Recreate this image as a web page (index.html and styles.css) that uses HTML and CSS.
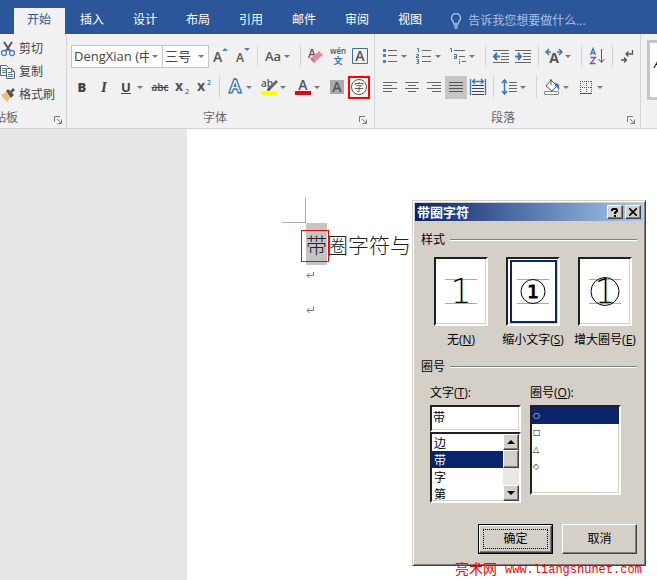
FILE: index.html
```html
<!DOCTYPE html>
<html lang="zh-CN">
<head>
<meta charset="utf-8">
<title>带圈字符</title>
<link rel="stylesheet" href="styles.css">
</head>
<body>
<nav class="tabs">
  <a class="tab active" href="#">开始</a>
  <a class="tab" href="#">插入</a>
  <a class="tab" href="#">设计</a>
  <a class="tab" href="#">布局</a>
  <a class="tab" href="#">引用</a>
  <a class="tab" href="#">邮件</a>
  <a class="tab" href="#">审阅</a>
  <a class="tab" href="#">视图</a>
  <button class="tell">
    <svg width="12" height="16" viewBox="0 0 12 16" fill="none" stroke="#a9c0e4" stroke-width="1.4"><path d="M4 11C4 9 1.500 8 1.500 5a4.500 4.500 0 0 1 9 0C10.500 8 8 9 8 11zM4 13h4M4.500 15h3"/></svg>
    告诉我您想要做什么...
  </button>
</nav>

<div class="ribbon">
  <section class="group clipboard">
    <div class="stack">
      <button class="cmd"><svg width="16" height="16" viewBox="0 0 16 16" fill="none"><path d="M4 1l6 9M12 1L6 10" stroke="#555" stroke-width="2"/><circle cx="4" cy="12" r="2.500" stroke="#4a80bd" stroke-width="1.300"/><circle cx="12" cy="12" r="2.500" stroke="#4a80bd" stroke-width="1.300"/></svg>剪切</button>
      <button class="cmd"><svg width="16" height="16" viewBox="0 0 16 16" fill="#fff" stroke="#666"><path d="M.5 1.500h6l2 2v8h-8z"/><path d="M2 4.500h4M2 6.500h4M2 8.500h4" stroke="#4a80bd"/><path d="M6.500 4.500h5l3 3v7h-8zM11.500 4.500v3h3"/><path d="M8 8.500h4M8 10.500h5M8 12.500h5" stroke="#4a80bd"/></svg>复制</button>
      <button class="cmd"><svg width="16" height="16" viewBox="0 0 16 16"><path d="M1 8l5-3 5 5-4 5z" fill="#edc076"/><path d="M6 4l2-2 6 6-3 3z" fill="#555"/><path d="M10 4l3-3 2 2-3 3z" fill="#555"/></svg>格式刷</button>
    </div>
    <div class="caption"><span>剪贴板</span><button class="launch" aria-label="剪贴板选项"><svg width="8" height="8" viewBox="0 0 8 8" fill="none" stroke="#777"><path d="M.5 6V.5H6M3 3l4 4M7.500 3.500v4h-4"/></svg></button></div>
  </section>

  <section class="group">
    <div class="row">
      <span class="combo name"><select aria-label="字体"><option>DengXian (中文正文)</option></select><i class="caret"></i></span>
      <span class="combo size"><select aria-label="字号"><option>三号</option></select><i class="caret"></i></span>
      <button class="tool" aria-label="增大字号"><svg width="18" height="18" viewBox="0 0 18 18"><text x="2" y="15" class="g" font-size="14">A</text><path d="M11 4l3-3 3 3z" fill="#4a80bd"/></svg></button>
      <button class="tool" aria-label="减小字号"><svg width="18" height="18" viewBox="0 0 18 18"><text x="3" y="15" class="g" font-size="12">A</text><path d="M11 1l3 3 3-3z" fill="#4a80bd"/></svg></button>
      <i class="sep"></i>
      <button class="tool split" aria-label="更改大小写"><svg width="18" height="18" viewBox="0 0 18 18"><text x="1" y="14" class="g" font-size="13">Aa</text></svg><i class="caret"></i></button>
      <i class="sep"></i>
      <button class="tool" aria-label="清除格式"><svg width="18" height="18" viewBox="0 0 18 18"><text x="1" y="11" class="g" font-size="12">A</text><path d="M12 4l4 4-7 6-4-4z" fill="#e58b9b"/><path d="M5 10l4 4-2 2-4-4z" fill="#d86f83"/></svg></button>
      <button class="tool" aria-label="拼音指南"><svg width="18" height="18" viewBox="0 0 18 18" overflow="visible"><text x="9" y="7" class="g" font-size="8" text-anchor="middle">wén</text><text x="9" y="17" class="b" font-size="9" text-anchor="middle">文</text></svg></button>
      <button class="tool" aria-label="字符边框"><svg width="18" height="18" viewBox="0 0 18 18"><path d="M1.500 1.500h15v15h-15z" fill="none" stroke="#41719c"/><text x="9" y="14" class="g" font-size="14" text-anchor="middle">A</text></svg></button>
    </div>
    <div class="row">
      <button class="tool letter"><b>B</b></button>
      <button class="tool letter serif"><em>I</em></button>
      <button class="tool letter split"><u>U</u><i class="caret"></i></button>
      <button class="tool strike"><s>abc</s></button>
      <button class="tool" aria-label="下标"><svg width="18" height="18" viewBox="0 0 18 18"><text x="2" y="13" class="g heavy" font-size="14">x</text><text x="12" y="16" class="b" font-size="7">2</text></svg></button>
      <button class="tool" aria-label="上标"><svg width="18" height="18" viewBox="0 0 18 18"><text x="2" y="13" class="g heavy" font-size="14">x</text><text x="12" y="7" class="b" font-size="7">2</text></svg></button>
      <i class="sep"></i>
      <button class="tool split" aria-label="文本效果"><svg width="18" height="18" viewBox="0 0 18 18"><text x="9" y="14" font-size="16" text-anchor="middle" fill="#fff" stroke="#3b78b8" stroke-width="3" paint-order="stroke">A</text></svg><i class="caret"></i></button>
      <button class="tool split" aria-label="突出显示"><svg width="18" height="18" viewBox="0 0 18 18"><text x="1" y="9" class="g" font-size="10">ab</text><path d="M16 2l2 2-7 7-3 1 1-3z" fill="#666"/><path d="M8 9l3 3-4 1z" fill="#444"/><path d="M1 13h16v4H1z" fill="#ff0"/></svg><i class="caret"></i></button>
      <button class="tool split" aria-label="字体颜色"><svg width="18" height="18" viewBox="0 0 18 18"><text x="9" y="12" class="g" font-size="14" text-anchor="middle">A</text><path d="M1 13h16v4H1z" fill="#e60012"/></svg><i class="caret"></i></button>
      <button class="tool" aria-label="字符底纹"><svg width="18" height="18" viewBox="0 0 18 18"><path d="M2 2h14v14H2z" fill="#aaa"/><text x="9" y="14" class="g" font-size="14" text-anchor="middle">A</text></svg></button>
      <button class="tool marked" aria-label="带圈字符"><svg width="18" height="18" viewBox="0 0 18 18"><circle cx="9" cy="9" r="7.500" fill="#fff" stroke="#555"/><text x="9" y="13" font-size="10" text-anchor="middle" fill="#444">字</text></svg></button>
    </div>
    <div class="caption"><span>字体</span><button class="launch" aria-label="字体选项"><svg width="8" height="8" viewBox="0 0 8 8" fill="none" stroke="#777"><path d="M.5 6V.5H6M3 3l4 4M7.500 3.500v4h-4"/></svg></button></div>
  </section>

  <section class="group paragraph">
    <div class="row">
      <button class="tool split" aria-label="项目符号"><svg width="18" height="18" viewBox="0 0 18 18"><path d="M2 2h3v3H2zM2 7h3v3H2zM2 13h3v3H2z" fill="#4a80bd"/><path d="M7 3.500h9M7 8.500h9M7 14.500h9" stroke="#666"/></svg><i class="caret"></i></button>
      <button class="tool split" aria-label="编号"><svg width="18" height="18" viewBox="0 0 18 18"><path d="M2 1.500h1.500V5M1.500 7.500h2v1.500h-2v1.500h2.500M1.500 12.500h2v4h-2M2 14.500h1.500" fill="none" stroke="#3b78b8"/><path d="M7 3.500h9M7 9.500h9M7 14.500h9" stroke="#666"/></svg><i class="caret"></i></button>
      <button class="tool split" aria-label="多级列表"><svg width="18" height="18" viewBox="0 0 18 18"><path d="M1 1.500h1.500V5M5 7.500h2.500v4H5.500v-2h2M10.500 12v1M10.500 14v3" fill="none" stroke="#3b78b8"/><path d="M5 3.500h11M10 9.500h6M13 14.500h4" stroke="#666"/></svg><i class="caret"></i></button>
      <i class="sep"></i>
      <button class="tool" aria-label="减少缩进"><svg width="18" height="18" viewBox="0 0 18 18"><path d="M1 3.500h16M9 6.500h8M9 9.500h8M9 12.500h8M1 15.500h16" stroke="#666"/><path d="M8 9.500H3M5 6L2 9.500 5 13" fill="none" stroke="#3b78b8" stroke-width="2"/></svg></button>
      <button class="tool" aria-label="增加缩进"><svg width="18" height="18" viewBox="0 0 18 18"><path d="M1 3.500h16M9 6.500h8M9 9.500h8M9 12.500h8M1 15.500h16" stroke="#666"/><path d="M1 9.500h5M4 6l3 3.500L4 13" fill="none" stroke="#3b78b8" stroke-width="2"/></svg></button>
      <i class="sep"></i>
      <button class="tool split" aria-label="中文版式"><svg width="18" height="18" viewBox="0 0 18 18"><text x="9" y="16" class="g heavy" font-size="14" text-anchor="middle">A</text><path d="M6 5H1.500M4 2L1 5l3 3M12 5h4.500M14 2l3 3-3 3" fill="none" stroke="#3b78b8" stroke-width="1.500"/></svg><i class="caret"></i></button>
      <i class="sep"></i>
      <button class="tool" aria-label="排序"><svg width="18" height="18" viewBox="0 0 18 18"><path d="M2.500 8L5 1.500 7.500 8M3.500 6h3" fill="none" stroke="#3b78b8" stroke-width="1.300"/><path d="M2.500 10.500h5l-5 6h5" fill="none" stroke="#8a4fa3" stroke-width="1.300"/><path d="M13.500 2v13M10.500 12l3 3.500 3-3.500" fill="none" stroke="#555"/></svg></button>
      <i class="sep"></i>
      <button class="tool" aria-label="显示编辑标记"><svg width="18" height="18" viewBox="0 0 18 18" fill="none" stroke="#555" stroke-width="1.300"><path d="M13.500 3v4H7M9.500 4.500L7 7l2.500 2.500M2 13h5M5 10.500L7.500 13 5 15.500"/></svg></button>
    </div>
    <div class="row">
      <button class="tool" aria-label="左对齐"><svg width="18" height="18" viewBox="0 0 18 18" stroke="#666"><path d="M2 4.500h14M2 7.500h9M2 10.500h14M2 13.500h9"/></svg></button>
      <button class="tool" aria-label="居中"><svg width="18" height="18" viewBox="0 0 18 18" stroke="#666"><path d="M2 4.500h14M5 7.500h8M2 10.500h14M5 13.500h8"/></svg></button>
      <button class="tool" aria-label="右对齐"><svg width="18" height="18" viewBox="0 0 18 18" stroke="#666"><path d="M2 4.500h14M7 7.500h9M2 10.500h14M7 13.500h9"/></svg></button>
      <button class="tool pressed" aria-label="两端对齐"><svg width="18" height="18" viewBox="0 0 18 18" stroke="#555"><path d="M2 4.500h14M2 7.500h14M2 10.500h14M2 13.500h14"/></svg></button>
      <button class="tool" aria-label="分散对齐"><svg width="18" height="18" viewBox="0 0 18 18" fill="none"><path d="M3 7.500h12M3 10.500h12M3 13.500h12M3 16.500h12" stroke="#444"/><path d="M1.500 1v16M16.500 1v16M4 3.500h10M6 1L3.500 3.500 6 6M12 1l2.500 2.500L12 6" stroke="#3b78b8" stroke-width="1.300"/></svg></button>
      <i class="sep"></i>
      <button class="tool split" aria-label="行距"><svg width="18" height="18" viewBox="0 0 18 18" fill="none"><path d="M4.500 2v14M2 5l2.500-3L7 5M2 13l2.500 3L7 13" stroke="#3b78b8" stroke-width="1.500"/><path d="M9 4.500h8M9 7.500h8M9 10.500h8M9 13.500h8" stroke="#666"/></svg><i class="caret"></i></button>
      <i class="sep"></i>
      <button class="tool split" aria-label="底纹"><svg width="18" height="18" viewBox="0 0 18 18"><path d="M8 2l6 6-5 5-6-5z" fill="#fff" stroke="#555"/><path d="M8 7V1" stroke="#555"/><path d="M12 5c4 0 5 3 4 8-1-3-2-4-4-5z" fill="#3b78b8"/><path d="M1.500 13.500h14v3h-14z" fill="#fff" stroke="#888"/></svg><i class="caret"></i></button>
      <button class="tool split" aria-label="边框"><svg width="18" height="18" viewBox="0 0 18 18" fill="none" stroke="#555"><path d="M3 3.500h12M3 9.500h12M3.500 3v12M9.500 3v12M14.500 3v12" stroke-dasharray="1 1"/><path d="M3 15.500h12"/></svg><i class="caret"></i></button>
    </div>
    <div class="caption"><span>段落</span><button class="launch" aria-label="段落选项"><svg width="8" height="8" viewBox="0 0 8 8" fill="none" stroke="#777"><path d="M.5 6V.5H6M3 3l4 4M7.500 3.500v4h-4"/></svg></button></div>
  </section>
  <section class="gallery"><div class="style-card"><em>A</em></div></section>
</div>

<main class="workspace">
  <article class="sheet">
    <i class="corner"></i>
    <p class="line"><span class="selected">带</span>圈字符与</p>
    <p class="empty"><svg width="9" height="9" viewBox="0 0 9 9" fill="none" stroke="#777"><path d="M7.500 1v3.500H1M3.500 2L1 4.500 3.500 7"/></svg></p>
    <p class="empty"><svg width="9" height="9" viewBox="0 0 9 9" fill="none" stroke="#777"><path d="M7.500 1v3.500H1M3.500 2L1 4.500 3.500 7"/></svg></p>
  </article>
</main>

<form class="dialog" role="dialog" aria-labelledby="dlg-title">
  <header class="titlebar">
    <span id="dlg-title">带圈字符</span>
    <button type="button" class="win" aria-label="帮助"><svg width="8" height="9" viewBox="0 0 8 9" fill="none" stroke="#000" stroke-width="2"><path d="M1 3V2l1-1h3l1 1v1L4 5v1M4 7v2"/></svg></button>
    <button type="button" class="win" aria-label="关闭"><svg width="8" height="8" viewBox="0 0 8 8" stroke="#000" stroke-width="1.600"><path d="M0 0l8 8M8 0L0 8"/></svg></button>
  </header>
  <h2 class="legend">样式</h2>
  <div class="styles">
    <label><input type="radio" name="style"><span class="preview"><svg width="45" height="61" viewBox="0 0 45 61"><path d="M6 18.500h32M6 42.500h32" stroke="#aaa"/><text x="22" y="42" class="digit">1</text></svg></span>无(<u>N</u>)</label>
    <label><input type="radio" name="style" checked><span class="preview"><svg width="45" height="61" viewBox="0 0 45 61"><path d="M6 18.500h32M6 42.500h32" stroke="#aaa"/><circle cx="22" cy="30.500" r="12" fill="#fff" stroke="#000"/><text x="22" y="37" class="digit small">1</text></svg></span>缩小文字(<u>S</u>)</label>
    <label><input type="radio" name="style"><span class="preview"><svg width="45" height="61" viewBox="0 0 45 61"><path d="M6 18.500h32M6 42.500h32" stroke="#aaa"/><circle cx="22" cy="30.500" r="14" fill="none" stroke="#000"/><text x="22" y="42" class="digit">1</text></svg></span>增大圈号(<u>E</u>)</label>
  </div>
  <h2 class="legend">圈号</h2>
  <div class="fields">
    <div class="field">
      <label for="chr">文字(<u>T</u>):</label>
      <input id="chr" class="sunken" type="text" value="带">
      <div class="sunken list">
        <select size="4" aria-label="文字列表"><option>边</option><option selected>带</option><option>字</option><option>第</option></select>
        <div class="scroll"><button type="button" aria-label="向上"><i class="up"></i></button><i class="thumb"></i><button type="button" aria-label="向下"><i class="down"></i></button></div>
      </div>
    </div>
    <div class="field">
      <label for="ring">圈号(<u>O</u>):</label>
      <div class="sunken list tall">
        <select id="ring" class="rings" size="5"><option selected>○</option><option>□</option><option>△</option><option>◇</option></select>
      </div>
    </div>
  </div>
  <footer class="actions">
    <span class="default"><button type="submit" class="btn"><span>确定</span></button></span>
    <button type="button" class="btn">取消</button>
  </footer>
</form>
<div class="watermark">亮术网 <span>www.liangshunet.com</span></div>
</body>
</html>
```
FILE: styles.css
```css
* { box-sizing: border-box; }

body {
  margin: 0;
  min-height: 100vh;
  display: flex;
  flex-direction: column;
  position: relative;
  overflow: hidden;
  background: #e6e6e6;
  color: #444;
  font: 12px/16px "Open Sans", "Noto Sans CJK SC", sans-serif;
}

button, select, input { font: inherit; color: inherit; }
button { padding: 0; border: 0; background: none; }
svg { display: block; flex: none; }
i { font-style: normal; }

/* Tabs */
.tabs {
  display: flex;
  gap: 1px;
  padding: 8px 0 0 14px;
  background: #2b579a;
}
.tab {
  padding: 4px 14px 6px;
  color: #fff;
  text-decoration: none;
  white-space: nowrap;
}
.tab.active { background: #f1f1f1; color: #2b579a; padding-left: 13px; }
.tell {
  display: flex;
  align-items: center;
  gap: 6px;
  margin-left: 13px;
  color: #a9c0e4;
  white-space: nowrap;
}

/* Ribbon */
.ribbon {
  display: flex;
  background: #f1f1f1;
  border-bottom: 1px solid #d0d0d0;
}
.group {
  flex: none;
  padding: 10px 3px 0 4px;
  border-right: 1px solid #d4d4d4;
}
.paragraph { padding-right: 1px; }
.row { display: flex; align-items: center; height: 24px; }
.row + .row { margin-top: 7px; }
.sep { width: 1px; height: 22px; margin: 0 4px; background: #d4d4d4; }
.caret {
  flex: none;
  width: 6px;
  border: 3px solid transparent;
  border-top-color: #777;
  border-bottom: 0;
}
.caption {
  display: flex;
  align-items: center;
  height: 20px;
  margin-top: 9px;
  color: #666;
}
.caption span { flex: 1; text-align: center; }
.launch { width: 12px; padding: 4px 0 0 0; }

.clipboard { width: 67px; padding: 3px 0 0; overflow: hidden; }
.stack { display: flex; flex-direction: column; }
.cmd { display: flex; align-items: center; gap: 3px; height: 23px; white-space: nowrap; }
.clipboard .caption { margin-top: 2px; justify-content: space-between; }
.clipboard .caption span { flex: none; margin-left: -18px; }

.combo {
  display: flex;
  align-items: center;
  height: 23px;
  padding-right: 4px;
  border: 1px solid #c6c6c6;
  background: #fff;
}
.combo select {
  appearance: none;
  flex: 1;
  min-width: 0;
  height: 21px;
  margin-right: 3px;
  padding: 0 0 0 2px;
  border: 0;
  background: none;
  font-size: 13px;
  overflow: hidden;
  text-overflow: clip;
}
.name { width: 92px; }
.size { width: 47px; margin-left: -1px; }

.tool {
  display: flex;
  flex: none;
  align-items: center;
  justify-content: center;
  width: 22px;
  height: 23px;
}
.split { width: 34px; justify-content: flex-start; padding-left: 2px; }
.split .caret { margin-left: 2px; }
.letter { font-size: 13px; font-weight: 700; }
.letter u { width: 18px; text-align: center; }
.serif { font-family: "Liberation Serif", serif; font-size: 15px; }
.strike { font-size: 10px; font-weight: 600; }
.pressed { background: #c5c5c5; }
.marked { border: 2px solid #f00; }
.g { fill: #555; font-weight: 600; }
.b { fill: #3b78b8; font-weight: 600; }
.heavy { font-weight: 700; }

.gallery { flex: 1; min-width: 0; padding: 6px 0 0 6px; overflow: hidden; }
.style-card {
  height: 60px;
  padding: 12px 0 0 4px;
  border: 3px solid #c6c6c6;
  border-right: 0;
  background: #fff;
  color: #000;
  font-size: 13px;
}

/* Document */
.workspace { flex: 1; padding-left: 187px; }
.sheet {
  min-height: 451px;
  height: 100%;
  padding: 69px 0 0 95px;
  background: #fff;
}
.corner {
  display: block;
  width: 24px;
  height: 25px;
  border: solid #aaa;
  border-width: 0 1px 1px 0;
}
.line {
  margin: 0 0 0 24px;
  color: #222;
  font: 300 21px/42px "Noto Sans CJK SC", sans-serif;
}
.selected { position: relative; display: inline-block; background: #c4c4c4; }
.selected::after {
  content: "";
  position: absolute;
  inset: 7px -2px 3px -5px;
  border: 1px solid #f00;
}
.empty { display: flex; margin: 0 0 0 24px; padding: 6px 0 20px; }

/* Dialog */
.dialog {
  position: absolute;
  left: 412px;
  top: 200px;
  width: 234px;
  padding: 2px;
  border: 1px solid;
  border-color: #d4d0c8 #404040 #404040 #d4d0c8;
  background: #d4d0c8;
  box-shadow: inset 1px 1px #fff, inset -1px -1px #808080;
  color: #000;
}
.titlebar {
  display: flex;
  align-items: center;
  gap: 2px;
  height: 18px;
  padding: 0 2px;
  background: linear-gradient(90deg, #0a246a, #a6caf0);
  color: #fff;
  font-size: 13px;
  font-weight: 700;
}
.titlebar span { flex: 1; }
.win, .btn, .scroll button, .thumb {
  background: #d4d0c8;
  border: 1px solid;
  border-color: #fff #404040 #404040 #fff;
  box-shadow: inset -1px -1px #808080;
}
.win { display: flex; align-items: center; justify-content: center; width: 16px; height: 14px; }
.legend {
  display: flex;
  align-items: center;
  gap: 5px;
  margin: 11px 6px 0;
  font-size: 12px;
  font-weight: 400;
}
.legend::after { content: ""; flex: 1; border-top: 1px solid #808080; border-bottom: 1px solid #fff; }
.styles {
  display: grid;
  grid-template-columns: repeat(3, 72px);
  margin: 9px 0 0 10px;
}
.styles label {
  display: block;
  position: relative;
  text-align: center;
  white-space: nowrap;
}
.styles input { position: absolute; opacity: 0; }
.preview {
  display: flex;
  align-items: center;
  justify-content: center;
  width: 54px;
  height: 69px;
  margin: 0 auto 6px;
  background: #fff;
}
.digit { font: 200 33px "DejaVu Sans", sans-serif; text-anchor: middle; }
.digit.small { font-size: 18px; font-weight: 400; stroke: #000; }
.preview, .sunken {
  border: 2px solid;
  border-color: #202020 #fff #fff #202020;
  box-shadow: inset -1px -1px #d4d0c8;
}
input:checked + .preview svg { outline: 2px solid #0a246a; outline-offset: -1px; }
.fields { display: flex; gap: 9px; margin: 10px 0 0 15px; }
.field { display: flex; flex-direction: column; width: 91px; }
.field label { margin-bottom: 4px; }
.sunken { background: #fff; }
input.sunken { width: 100%; height: 27px; padding: 0 1px 3px; border-radius: 0; outline: 0; }
.list { display: flex; height: 71px; overflow: hidden; }
.tall { height: 90px; }
.list select {
  appearance: none;
  flex: 1;
  min-width: 0;
  padding: 0;
  border: 0;
  border-radius: 0;
  background: none;
  overflow: hidden;
  outline: 0;
}
.list option { height: 17px; min-height: 17px; padding: 0 2px; line-height: 16px; color: #000; }
.list option:checked { background: #0a246a linear-gradient(#0a246a, #0a246a); color: #fff; }
.list .rings option { padding: 4px 1px 0; font: 700 8px/12px "DejaVu Sans", sans-serif; }
.scroll { display: flex; flex-direction: column; width: 16px; background: #eae8e3; }
.scroll button { display: flex; align-items: center; justify-content: center; height: 16px; }
.thumb { height: 18px; margin-bottom: auto; }
.up, .down { border: 4px solid transparent; }
.up { border-top: 0; border-bottom-color: #000; }
.down { border-bottom: 0; border-top-color: #000; }
.actions { display: flex; justify-content: flex-end; gap: 9px; margin: 21px 6px 9px 0; }
.btn { width: 75px; height: 30px; }
.default { border: 1px solid #000; }
.default .btn { display: block; width: 73px; height: 28px; padding: 3px; }
.default .btn span { display: block; border: 1px dotted #000; line-height: 18px; }

.watermark {
  position: absolute;
  left: 455px;
  top: 558px;
  display: flex;
  gap: 8px;
  color: #f00;
  font: 14px/20px "Noto Sans CJK SC", sans-serif;
  white-space: nowrap;
}
.watermark span { font: 12px/24px "Liberation Mono", monospace; }
```
